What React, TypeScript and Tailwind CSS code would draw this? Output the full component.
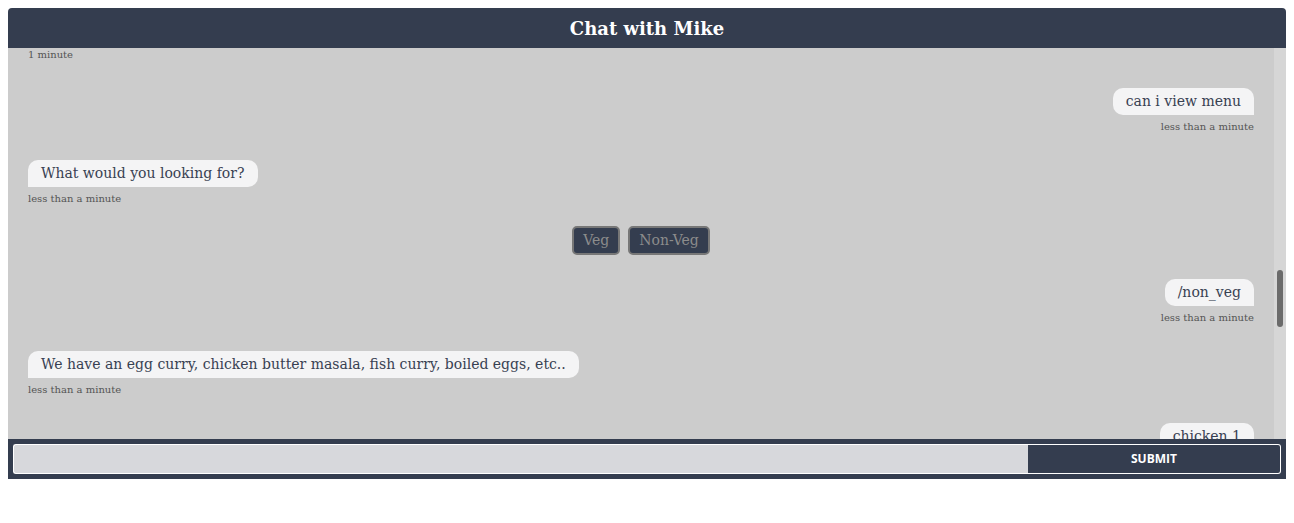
import { useLayoutEffect, useRef } from "react";

type Message = {
  from: "bot" | "user";
  text: string;
  time: string;
  options?: string[];
  anchor?: boolean;
};

const history: Message[] = [
  { from: "user", text: "hi", time: "3 minutes" },
  { from: "bot", text: "Hello! I am Mike, how can I help you today?", time: "3 minutes" },
  { from: "user", text: "what are your timings", time: "2 minutes" },
  { from: "bot", text: "We are open from 11 am to 11 pm, all days of the week.", time: "2 minutes" },
  { from: "user", text: "ok", time: "1 minute" },
  { from: "bot", text: "Anything else I can help you with?", time: "1 minute" },
  { from: "user", text: "can i view menu", time: "less than a minute", anchor: true },
  {
    from: "bot",
    text: "What would you looking for?",
    time: "less than a minute",
    options: ["Veg", "Non-Veg"],
  },
  { from: "user", text: "/non_veg", time: "less than a minute" },
  {
    from: "bot",
    text: "We have an egg curry, chicken butter masala, fish curry, boiled eggs, etc..",
    time: "less than a minute",
  },
  { from: "user", text: "chicken 1", time: "less than a minute" },
  { from: "bot", text: "Chicken butter masala x 1 added to your cart.", time: "less than a minute" },
];

function Bubble({ msg }: { msg: Message }) {
  const isUser = msg.from === "user";
  return (
    <div
      data-anchor={msg.anchor ? "yes" : undefined}
      className={`flex flex-col mb-[27px] ${isUser ? "items-end" : "items-start"}`}
    >
      <div
        className={`bg-[#f4f4f5] text-[#384152] text-[14px] leading-[27px] h-[27px] px-[13px] whitespace-nowrap ${
          isUser ? "rounded-[10px] rounded-br-none" : "rounded-[10px] rounded-bl-none"
        }`}
      >
        {msg.text}
      </div>
      <div className="mt-[6px] text-[10px] leading-[12px] text-[#555555]">
        {msg.time}
      </div>
      {msg.options && (
        <div className="self-stretch flex justify-center gap-2 mt-[21px] -mb-[3px]">
          {msg.options.map((o) => (
            <button
              key={o}
              className="h-[29px] px-[9px] bg-[#343d4f] border-2 border-[#777777] rounded-[5px] text-[14px] text-[#8c8c8c] font-['DejaVu_Serif',serif]"
            >
              {o}
            </button>
          ))}
        </div>
      )}
    </div>
  );
}

export default function App() {
  const listRef = useRef<HTMLDivElement>(null);

  useLayoutEffect(() => {
    const list = listRef.current;
    if (!list) return;
    const target = list.querySelector<HTMLElement>("[data-anchor='yes']");
    if (target) list.scrollTop = target.offsetTop - 40;
  }, []);

  return (
    <div className="p-2 font-['DejaVu_Serif',serif]">
      <div className="rounded-t-[4px] overflow-hidden">
        <div className="h-10 bg-[#343d4f] flex items-center justify-center">
          <h1 className="text-white font-bold text-[18px]">Chat with Mike</h1>
        </div>

        <div className="flex h-[391px] bg-[#cccccc]">
          <div ref={listRef} className="relative flex-1 overflow-hidden px-5 pt-5">
            {history.map((m, i) => (
              <Bubble key={i} msg={m} />
            ))}
          </div>
          {/* scrollbar */}
          <div className="w-3 bg-[#d6d6d6] flex justify-center">
            <div className="w-[6px] h-[57px] mt-[222px] rounded-full bg-[#6b6b6b]" />
          </div>
        </div>

        <form
          className="h-10 bg-[#343d4f] flex p-[5px]"
          onSubmit={(e) => e.preventDefault()}
        >
          <input
            type="text"
            className="flex-1 min-w-0 h-[30px] bg-[#d7d8dc] border border-r-0 border-white rounded-l-[3px] outline-none px-2 text-sm"
          />
          <button
            type="submit"
            className="w-[253px] h-[30px] border border-l-0 border-white rounded-r-[3px] bg-[#343d4f] text-white text-[12px] font-bold font-['Open_Sans',sans-serif]"
          >
            SUBMIT
          </button>
        </form>
      </div>
    </div>
  );
}
